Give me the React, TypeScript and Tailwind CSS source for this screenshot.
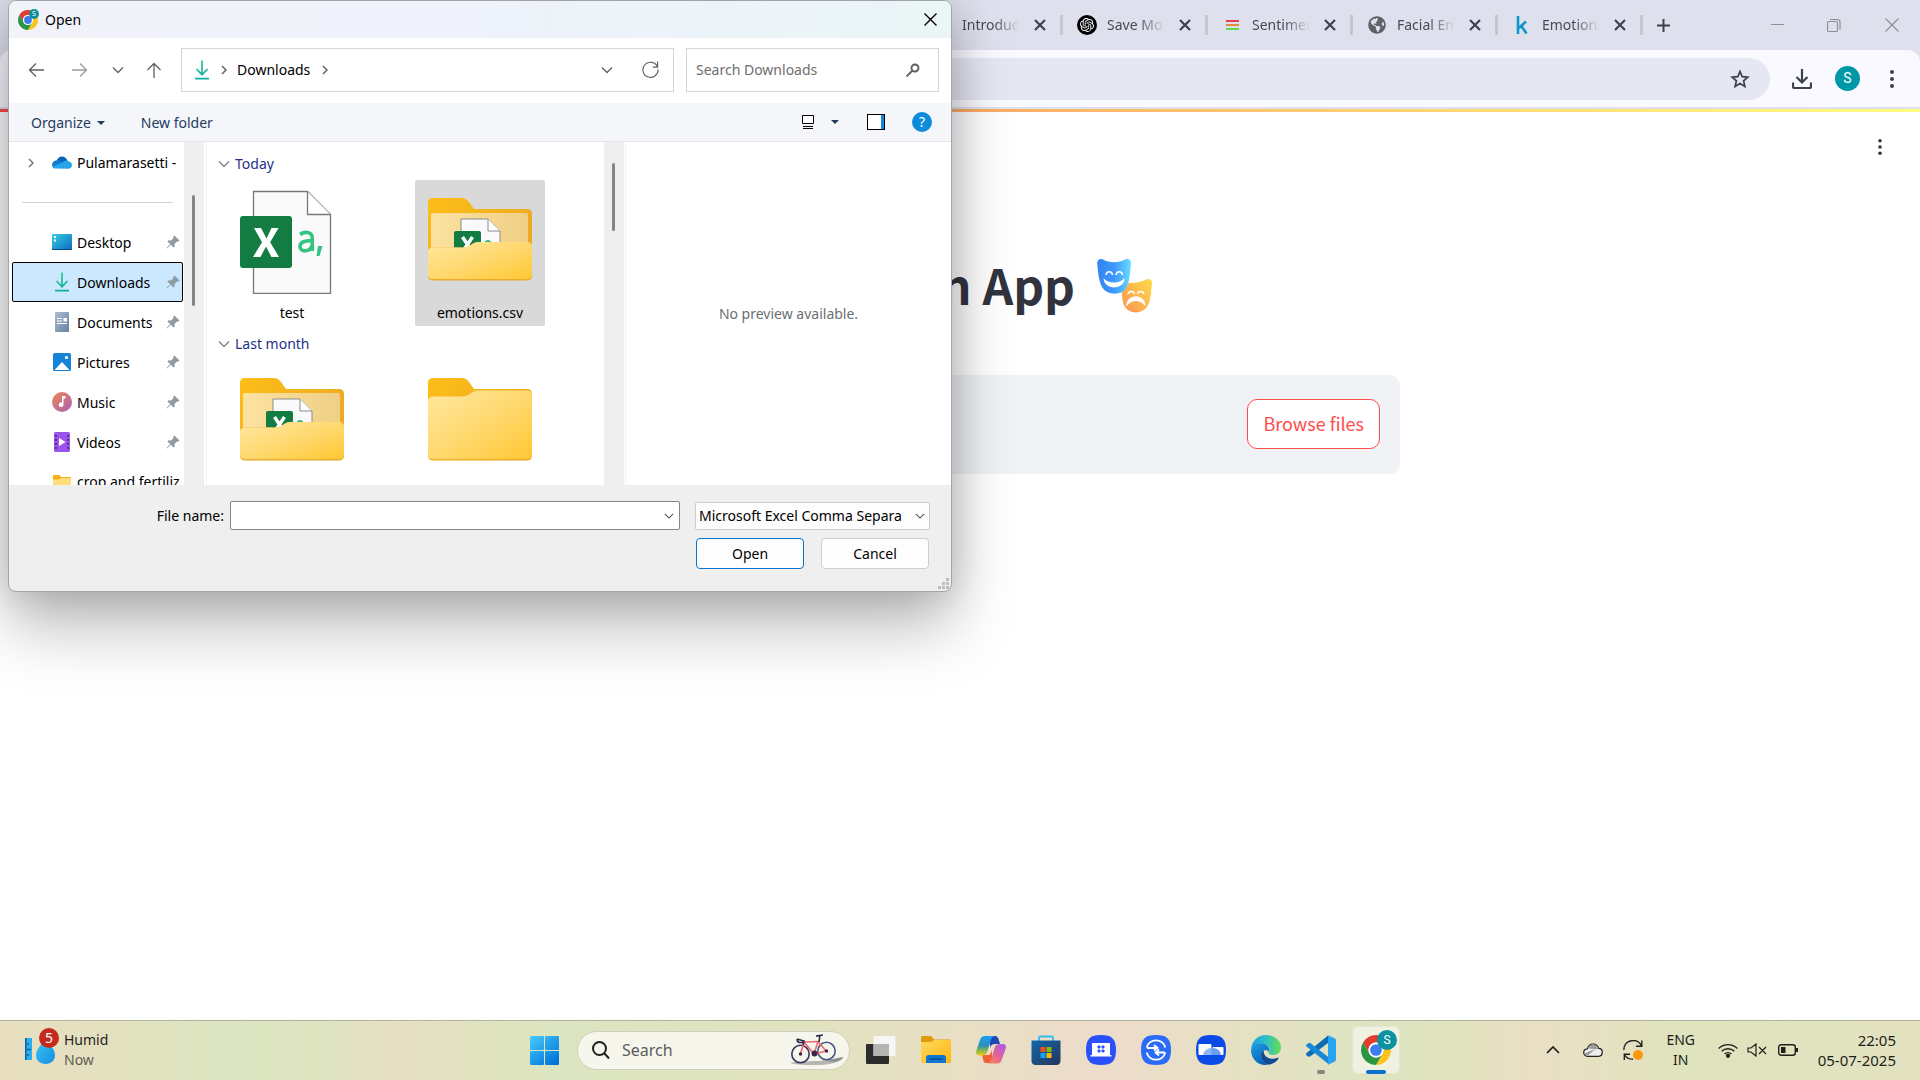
import type { ReactNode } from "react";
import { SiOpenai } from "react-icons/si";
import { FaGlobeAmericas } from "react-icons/fa";

const UI = "font-['Noto_Sans','Open_Sans',sans-serif]";

/* ---------- brand and app icons ---------- */

function ChromeIcon({ className }: { className: string }) {
  return (
    <svg viewBox="2 2 44 44" className={className} aria-hidden="true">
      <path d="M24 13H43.05A22 22 0 0 0 4.95 13L14.47 29.5A11 11 0 0 1 24 13Z" fill="#e33b2e" />
      <path d="M43.05 13A22 22 0 0 1 24 46L33.53 29.5A11 11 0 0 0 24 13Z" fill="#fcc419" />
      <path d="M24 46A22 22 0 0 1 4.95 13L14.47 29.5A11 11 0 0 0 33.53 29.5Z" fill="#2a9644" />
      <circle cx="24" cy="24" r="11" fill="#fff" />
      <circle cx="24" cy="24" r="8.6" fill="#3b7ded" />
    </svg>
  );
}

function MasksIcon() {
  return (
    <svg viewBox="0 0 56 56" className="size-14" aria-hidden="true">
      <defs>
        <linearGradient id="maskBlue" x1="0" y1="0" x2="1" y2="0">
          <stop offset="0" stopColor="#2f86ee" />
          <stop offset="0.5" stopColor="#3f97fd" />
          <stop offset="1" stopColor="#69dcff" />
        </linearGradient>
        <linearGradient id="maskGold" x1="0" y1="1" x2="1" y2="0">
          <stop offset="0" stopColor="#fb9253" />
          <stop offset="1" stopColor="#ffdc4b" />
        </linearGradient>
      </defs>
      <path d="M26 24C33 26 43 25 49 21.500C52 20 55.500 21.500 55 25C54 35 54 42 50.500 48C46 56 32 57 27.500 48C25 43 25 36 24.500 30Z" fill="url(#maskGold)" />
      <path d="M.2 5C0 2 3 0 6 1.500C12 5 22 5 28 1.500C31 0 34.500 2 34 5.500C33 14 33 22 30 28.500C26 38 10 38 5 29C1.500 22 1 13 .2 5Z" fill="url(#maskBlue)" />
      <path d="M6.500 20C11 26 23 26 27.500 20C28 32 7 33 6.500 20Z" fill="#fff" />
      <path d="M9 17C9.500 12.500 15 12.500 15.500 17M19 17C19.500 12.500 25 12.500 25.500 17" stroke="#fff" strokeWidth="1.500" fill="none" />
      <path d="M29 48.500C29.500 34.500 48.500 35 48.500 48C42 41.500 36 41 29 48.500Z" fill="#fff" />
      <path d="M31 36C32 32.500 36.500 32.500 37.500 36M40.500 36C41.500 32.500 46 32.500 47 36" stroke="#fff" strokeWidth="1.500" fill="none" />
    </svg>
  );
}

function BicycleIcon() {
  return (
    <svg viewBox="0 0 56 32" className="h-8 w-14 shrink-0" aria-hidden="true">
      <path d="M1 29C14 26 30 28 36 26L54 23C54 27 42 31 30 31C18 31 8 31 1 29Z" fill="#b5b5b2" />
      <path d="M38 27L54 23C53 27 44 29 38 27Z" fill="#8d8d8b" />
      <g fill="none" strokeWidth="1.600">
        <circle cx="11.500" cy="20" r="8.700" stroke="#3a3560" />
        <circle cx="37.500" cy="17" r="8.700" stroke="#42588a" />
        <path d="M11.500 20L15 8L29 7.500L25 20L15 8M25 20L37 17L29 7.500" stroke="#f0686f" />
        <path d="M14 11L15 7L8 5M8 5C8 9 11 9 14 8M30 8L31 1M27 2L34 1" stroke="#2c2a45" />
      </g>
      <circle cx="25.500" cy="19.500" r="3" fill="#3a2544" />
      <circle cx="11.500" cy="20" r="1.700" fill="#3a2544" />
      <circle cx="37.500" cy="17" r="1.700" fill="#3a2544" />
    </svg>
  );
}

function WindowsIcon() {
  return (
    <svg viewBox="0 0 29 29" className="size-[29px]" aria-hidden="true">
      <defs>
        <linearGradient id="win" gradientUnits="userSpaceOnUse" x1="0" y1="0" x2="24" y2="29">
          <stop offset="0" stopColor="#47cdff" />
          <stop offset="1" stopColor="#0072d6" />
        </linearGradient>
      </defs>
      <g fill="url(#win)">
        <rect width="14" height="14" rx="1" />
        <rect x="15" width="14" height="14" rx="1" />
        <rect y="15" width="14" height="14" rx="1" />
        <rect x="15" y="15" width="14" height="14" rx="1" />
      </g>
    </svg>
  );
}

function TaskViewIcon() {
  return (
    <svg viewBox="0 0 30 30" className="size-[30px]" aria-hidden="true">
      <rect x="0" y="9" width="23" height="20" rx="1" fill="#2c2c2c" />
      <rect x="7.500" y="1" width="22" height="20" rx="1" fill="#f6f6f6" />
      <rect x="7.500" y="9" width="15.500" height="12" fill="#b4b4b2" />
    </svg>
  );
}

function ExplorerIcon() {
  return (
    <svg viewBox="0 0 30 28" className="h-7 w-[30px]" aria-hidden="true">
      <defs>
        <linearGradient id="expl" x1="0" y1="0" x2="1" y2="1">
          <stop offset="0" stopColor="#ffd75e" />
          <stop offset="1" stopColor="#fdb813" />
        </linearGradient>
      </defs>
      <path d="M0 1.500C0 .7.700 0 1.500 0H10L13 3.500H29C29.600 3.500 30 4 30 4.500V12H0Z" fill="#dd9b0b" />
      <path d="M0 6H10L13 4H30V25.500C30 26.400 29.500 27 28.500 27H1.500C.5 27 0 26.400 0 25.500Z" fill="url(#expl)" />
      <path d="M5 27V21.500C5 20 6 19 7.500 19H22.500C24 19 25 20 25 21.500V27Z" fill="#0f76cf" />
      <path d="M8.500 23H21.500" stroke="#0a4f94" strokeWidth="1.500" />
    </svg>
  );
}

function CopilotIcon() {
  return (
    <svg viewBox="0 0 30 28" className="h-7 w-[30px]" aria-hidden="true">
      <defs>
        <linearGradient id="copA" x1="0" y1="0" x2="0" y2="1">
          <stop offset="0" stopColor="#1aa0f0" />
          <stop offset="0.500" stopColor="#2b90b8" />
          <stop offset="0.750" stopColor="#88b84a" />
          <stop offset="1" stopColor="#f2c314" />
        </linearGradient>
        <linearGradient id="copB" x1="1" y1="0" x2="0" y2="1">
          <stop offset="0" stopColor="#a45df0" />
          <stop offset="0.500" stopColor="#e2609c" />
          <stop offset="1" stopColor="#fb8d45" />
        </linearGradient>
      </defs>
      <path d="M14 0H19C21 0 22 1.500 22.500 3L24 8H19C16 8 15 9 14 12Z" fill="#1c47b8" />
      <path d="M16 27H10C8 27 7.500 25 7 23L6 19H12C14 19 15 17 16 14Z" fill="#f2603a" />
      <path d="M9 0H19C16.500 0 15.500 2 14.500 5L11.500 15C10.500 18.500 9 19.500 6 19.500H3C.5 19.500-.5 17.500.3 15L4 4C5 1.500 6 0 9 0Z" fill="url(#copA)" />
      <path d="M21 27.500H11C13.500 27.500 14.500 25.500 15.500 22.500L18.500 12C19.500 9 21 8 24 8H27C29.500 8 30.500 10 29.700 12.500L26 23C25 26 24 27.500 21 27.500Z" fill="url(#copB)" />
    </svg>
  );
}

function StoreIcon() {
  return (
    <svg viewBox="0 0 30 30" className="size-[30px]" aria-hidden="true">
      <defs>
        <linearGradient id="store" x1="0" y1="0" x2="1" y2="1">
          <stop offset="0" stopColor="#1169ae" />
          <stop offset="1" stopColor="#263557" />
        </linearGradient>
      </defs>
      <path d="M8 7V3C8 2 8.500 1.500 9.500 1.500H20.500C21.500 1.500 22 2 22 3V7" fill="none" stroke="#38bdf2" strokeWidth="2" />
      <path d="M.5 5.500H29.500V26C29.500 28 28 30 25.500 30H4.500C2 30 .5 28 .5 26Z" fill="url(#store)" />
      <rect x="9.500" y="12" width="5" height="5" fill="#f4511e" />
      <rect x="15.500" y="12" width="5" height="5" fill="#80bb0a" />
      <rect x="9.500" y="18" width="5" height="5" fill="#12a5ee" />
      <rect x="15.500" y="18" width="5" height="5" fill="#fdb90b" />
    </svg>
  );
}

function Squircle({ color, children }: { color: string; children: ReactNode }) {
  return (
    <svg viewBox="0 0 30 30" className="size-[30px]" aria-hidden="true">
      <path d="M15 0C26 0 30 4 30 15S26 30 15 30 0 26 0 15 4 0 15 0Z" fill={color} />
      {children}
    </svg>
  );
}

function LaptopAppIcon() {
  return (
    <Squircle color="#2a50fb">
      <path d="M6 8H24V20H25.500V21.500H4.500V20H6Z" fill="#fff" />
      <g fill="#2a50fb">
        <rect x="11.500" y="10.500" width="3" height="3" rx="1" />
        <rect x="15.500" y="10.500" width="3" height="3" rx="1" />
        <rect x="11.500" y="14.500" width="3" height="3" rx="1" />
        <rect x="15.500" y="14.500" width="3" height="3" rx="1" />
      </g>
    </Squircle>
  );
}

function SwitchAppIcon() {
  return (
    <Squircle color="#2a6cf8">
      <path d="M5.700 12.500A9.600 9.600 0 0 1 24.300 12.500M24.300 17.500A9.600 9.600 0 0 1 5.700 17.500M6 13H16M13 10L16.500 13L13 15.500M24 17.500H15M18 14.500L14.500 17.500L18 20.500" fill="none" stroke="#fff" strokeWidth="1.800" />
    </Squircle>
  );
}

function ScreensAppIcon() {
  return (
    <Squircle color="#0b4ae6">
      <rect x="2.500" y="9" width="13" height="11" rx="1" fill="#fff" />
      <rect x="16.500" y="12" width="11" height="8" rx="1" fill="#fff" />
      <path d="M7 20C8 15 12 13 15.500 13V20Z" fill="#8db8f8" />
      <path d="M15.500 13H16.500C20.500 13 24.500 15.500 25 20H15.500Z" fill="#6a9ef3" />
    </Squircle>
  );
}

function EdgeIcon() {
  return (
    <svg viewBox="0 0 30 30" className="size-[30px]" aria-hidden="true">
      <defs>
        <linearGradient id="edgeTop" x1="0" y1="0.500" x2="1" y2="0.500">
          <stop offset="0" stopColor="#1b9de2" />
          <stop offset="0.500" stopColor="#2cc1c4" />
          <stop offset="1" stopColor="#69dd50" />
        </linearGradient>
        <linearGradient id="edgeLeft" x1="0" y1="0" x2="0.500" y2="1">
          <stop offset="0" stopColor="#1d9fe8" />
          <stop offset="1" stopColor="#0a63b5" />
        </linearGradient>
      </defs>
      <path d="M0 14.500C.5 6 7 0 15 0C24 0 30 6 30 12.500C30 17.500 26 20 22 20C18.500 20 17 18.700 17.700 17.500C20 14.500 18 9.500 12 8.500C6 8 1.500 10.500 0 14.500Z" fill="url(#edgeTop)" />
      <path d="M0 15C1 10.500 5 7.800 11 8.200C16 8.600 19.500 13 18 17C15 13 10.500 16 10.500 21C10.500 25.500 14 29 18 29.500C8 32 0 24.500 0 15Z" fill="url(#edgeLeft)" />
      <path d="M12.500 15.500C7.500 19 11 29 18 29.500C22 29.300 26 26.500 27.500 23.500C28 22.700 27.500 22.300 26.700 22.700C20 25.500 12.500 22.500 12.500 15.500Z" fill="#104a91" />
    </svg>
  );
}

function VsCodeIcon() {
  return (
    <svg viewBox="0 0 30 30" className="size-[30px]" aria-hidden="true">
      <path d="M0 18.500L22 0.500V8L4 21.500C3 22 1.500 21.500.5 20.500Z" fill="#0e6cb5" />
      <path d="M.5 9.500L3 8C3.500 7.700 4 7.800 4.500 8.200L23 22.500V29.500L.5 11.500C0 11 0 10 .5 9.500Z" fill="#1789d6" />
      <path d="M22 .3L28.500 3.300C29.500 3.800 30 4.500 30 5.500V24.500C30 25.500 29.500 26.200 28.500 26.700L22 29.700Z" fill="#27a5f3" />
    </svg>
  );
}

function HumidityIcon() {
  return (
    <svg viewBox="0 0 30 30" className="size-[30px]" aria-hidden="true">
      <defs>
        <linearGradient id="drop" x1="0" y1="0" x2="1" y2="1">
          <stop offset="0" stopColor="#38cbf5" />
          <stop offset="1" stopColor="#178ce0" />
        </linearGradient>
      </defs>
      <rect x="0" y="3" width="7" height="22" fill="#2bafef" />
      <path d="M.8 3V25M2 9H4M2 14.500H6M2 20H4" stroke="#0c5fa8" strokeWidth="1.500" />
      <path d="M20.500 3C23 9 30 13 30 20C30 25.500 26 29 20.500 29S11 25.500 11 20C11 13 18 9 20.500 3Z" fill="url(#drop)" />
    </svg>
  );
}

/* ---------- small line icons ---------- */

function Line({ d, box, className, width = 1.5 }: { d: string; box: string; className: string; width?: number }) {
  return (
    <svg viewBox={box} className={className} fill="none" stroke="currentColor" strokeWidth={width} aria-hidden="true">
      <path d={d} />
    </svg>
  );
}

const ChevronDown = ({ className }: { className: string }) => <Line box="0 0 12 8" d="M1 1.500L6 6.500L11 1.500" className={className} width={1.3} />;

function DownloadsIcon() {
  return (
    <svg viewBox="0 0 14 20" className="h-5 w-3.5" fill="none" stroke="url(#dlg)" strokeWidth="1.700" aria-hidden="true">
      <defs>
        <linearGradient id="dlg" gradientUnits="userSpaceOnUse" x1="0" y1="0" x2="14" y2="20">
          <stop offset="0" stopColor="#2fd089" />
          <stop offset="1" stopColor="#0aa3a6" />
        </linearGradient>
      </defs>
      <path d="M7 0.500V14.500M1.500 9L7 14.700L12.500 9M0 18.600H14" />
    </svg>
  );
}

function PinIcon() {
  return (
    <svg viewBox="0 0 14 14" className="size-3.5" fill="#8f9ba3" aria-hidden="true">
      <path d="M8.500.5L13.500 5.500L12 6.800L11 6.500L8.500 9L8.700 11.500L7.500 12.500L4.700 9.800L1 13.500L.4 13L4.200 9.200L1.500 6.500L2.500 5.300L5 5.500L7.500 3L7.200 1.800Z" />
    </svg>
  );
}

function OneDriveIcon() {
  return (
    <svg viewBox="0 0 20 13" className="h-[13px] w-5" aria-hidden="true">
      <path d="M4.500 5C6-.5 13-1.500 15.500 4.500L10 9L2 8Z" fill="#0a62b8" />
      <path d="M4.500 4.500C1 4.500-.5 8 .3 10.500L3 12L12 7.500L8 4.800C7 4.400 5.500 4.200 4.500 4.500Z" fill="#1279cf" />
      <path d="M2.500 12.500C1.500 12.500.8 11.800.4 10.800L11 6C12 5 15 3.500 17 5.500C19.500 6 20.500 8.500 19.700 10.500C19 12 18 12.700 16.500 12.700Z" fill="#28a5ea" />
    </svg>
  );
}

function DesktopIcon() {
  return (
    <svg viewBox="0 0 20 16" className="h-4 w-5" aria-hidden="true">
      <defs>
        <linearGradient id="desk" x1="0" y1="0" x2="1" y2="1">
          <stop offset="0" stopColor="#33cfe4" />
          <stop offset="1" stopColor="#0e68bd" />
        </linearGradient>
      </defs>
      <rect width="20" height="16" rx="1" fill="url(#desk)" />
      <path d="M2 2H4V4H2ZM2 5.500H4V7.500H2Z" fill="#fff" />
      <path d="M0 15H20V15.500Q20 16 19 16H1Q0 16 0 15.500Z" fill="#0c4a80" />
    </svg>
  );
}

function DocumentIcon() {
  return (
    <svg viewBox="0 0 14 20" className="h-5 w-3.5" aria-hidden="true">
      <defs>
        <linearGradient id="doc" x1="0" y1="0" x2="1" y2="1">
          <stop offset="0" stopColor="#adbfd2" />
          <stop offset="1" stopColor="#64809f" />
        </linearGradient>
      </defs>
      <rect width="14" height="20" rx="1" fill="url(#doc)" />
      <path d="M2 6.500H7M2 9H7M2 11.500H12M8.500 7.700H12" stroke="#fff" strokeWidth="1.100" />
      <rect x="8.500" y="6" width="3.500" height="3.500" fill="#fff" />
    </svg>
  );
}

function PictureIcon() {
  return (
    <svg viewBox="0 0 18 18" className="size-[18px]" aria-hidden="true">
      <rect width="18" height="18" rx="1.500" fill="#1583d8" />
      <path d="M1.500 17L9 9L16.500 17Z" fill="#fff" />
      <circle cx="13.500" cy="4.500" r="1.600" fill="#fff" />
    </svg>
  );
}

function MusicIcon() {
  return (
    <svg viewBox="0 0 20 20" className="size-5" aria-hidden="true">
      <defs>
        <linearGradient id="music" x1="0" y1="0" x2="1" y2="1">
          <stop offset="0" stopColor="#f08650" />
          <stop offset="1" stopColor="#a761b8" />
        </linearGradient>
      </defs>
      <circle cx="10" cy="10" r="10" fill="url(#music)" />
      <path d="M10 4H13.500V6.500H11.500V12.500A2.300 2.300 0 1 1 10 10.500Z" fill="#fff" />
    </svg>
  );
}

function VideoIcon() {
  return (
    <svg viewBox="0 0 16 20" className="h-5 w-4" aria-hidden="true">
      <rect width="16" height="20" rx="1.500" fill="#9b54ea" />
      <path d="M2 3V18M14 3V18" stroke="#47257d" strokeWidth="1.800" strokeDasharray="1.800 2.200" />
      <path d="M5 6L11.500 10L5 14Z" fill="#fff" />
    </svg>
  );
}

function SmallFolderIcon() {
  return (
    <svg viewBox="0 0 18 14" className="h-3.5 w-[18px]" aria-hidden="true">
      <path d="M0 0H6.500L8 2H18V6H0Z" fill="#f5b01b" />
      <path d="M0 4.500H6L8 3H18V14H0Z" fill="#ffdc7c" />
    </svg>
  );
}

function FolderGradients() {
  return (
    <defs>
      <linearGradient id="fback" x1="0" y1="0" x2="1" y2="0.600">
        <stop offset="0" stopColor="#fdbe19" />
        <stop offset="1" stopColor="#eaa922" />
      </linearGradient>
      <linearGradient id="ffront" x1="0" y1="0" x2="1" y2="1">
        <stop offset="0" stopColor="#ffe7a0" />
        <stop offset="0.500" stopColor="#ffd970" />
        <stop offset="1" stopColor="#ffc733" />
      </linearGradient>
      <linearGradient id="fpaper" x1="0" y1="0" x2="1" y2="0">
        <stop offset="0" stopColor="#fce2a0" />
        <stop offset="1" stopColor="#efcf86" />
      </linearGradient>
    </defs>
  );
}

function FullFolderIcon() {
  return (
    <svg viewBox="0 0 104 83" className="h-[83px] w-[104px]" aria-hidden="true">
      <FolderGradients />
      <path d="M0 5Q0 0 5 0H34Q38 0 41 4L46 11H99Q104 11 104 16V77Q104 82 99 82H5Q0 82 0 77Z" fill="url(#fback)" />
      <rect x="3" y="15" width="97" height="50" rx="2" fill="url(#fpaper)" />
      <path d="M33 21H60L72 33V60H33Z" fill="#fafafa" stroke="#8b8b8b" />
      <path d="M60 21V33H72" fill="#fff" stroke="#8b8b8b" />
      <path d="M57 46C58 42 62 42 63 46V52" fill="none" stroke="#33b97a" strokeWidth="2" />
      <rect x="26" y="33" width="27" height="27" rx="2" fill="#127c43" />
      <path d="M34.500 39L44.500 54M44.500 39L34.500 54" stroke="#fff" strokeWidth="3.500" />
      <path d="M0 54Q0 49.500 5 49.500H35Q39 49.500 42 47.500L45 45.500Q47 44 50 44H99Q104 44 104 49V77Q104 82.500 99 82.500H5Q0 82.500 0 77Z" fill="#e9ad2e" />
      <path d="M0 54Q0 49.500 5 49.500H35Q39 49.500 42 47.500L45 45.500Q47 44 50 44H99Q104 44 104 49V76Q104 81 99 81H5Q0 81 0 76Z" fill="url(#ffront)" />
    </svg>
  );
}

function EmptyFolderIcon() {
  return (
    <svg viewBox="0 0 104 83" className="h-[83px] w-[104px]" aria-hidden="true">
      <FolderGradients />
      <path d="M0 5Q0 0 5 0H34Q38 0 41 4L46 11H99Q104 11 104 16V77Q104 82.500 99 82.500H5Q0 82.500 0 77Z" fill="url(#fback)" />
      <path d="M0 24Q0 18.500 5 18.500H34Q38 18.500 41 16.500L45 14Q47 12.500 50 12.500H99Q104 12.500 104 17V76Q104 81 99 81H5Q0 81 0 76Z" fill="url(#ffront)" />
    </svg>
  );
}

function CsvFileIcon() {
  return (
    <svg viewBox="0 -5 104 108" className="h-[108px] w-[104px]" aria-hidden="true">
      <path d="M13.500 .5H67.500L90.500 23.500V102.300H13.500Z" fill="#fafafa" stroke="#777" strokeWidth="1.300" />
      <path d="M67.500 .5V23.500H90.500" fill="#fff" stroke="#777" strokeWidth="1.300" />
      <rect x="0" y="25" width="52" height="52" rx="3" fill="#127c43" />
      <path d="M14 37H21L26.500 47.500L31.500 37H38.500L30.200 51.200L39 66H31.500L26 55.500L20.500 66H13L22 51.200Z" fill="#fff" />
      <path d="M60 43.500C64 40.500 72 40 72.300 47V60M72.300 49.500C64 50 60 51 60 55.500C60 61.500 70 61.500 72.300 54" fill="none" stroke="#33c481" strokeWidth="3.600" />
      <path d="M78 55H82.500L79.500 65H76.500Z" fill="#33c481" />
    </svg>
  );
}

/* ---------- browser ---------- */

const tabs: { title: string; icon: ReactNode }[] = [
  { title: "Introduc", icon: null },
  {
    title: "Save Mo",
    icon: (
      <span className="flex size-5 items-center justify-center rounded-full bg-black">
        <SiOpenai className="size-3.5 text-white" />
      </span>
    ),
  },
  {
    title: "Sentimer",
    icon: (
      <svg viewBox="0 0 13 10" className="h-2.5 w-[13px]" aria-hidden="true">
        <path d="M0 1H13" stroke="#e63f4b" strokeWidth="2" />
        <path d="M0 5H13" stroke="#e08e39" strokeWidth="2" />
        <path d="M0 9H13" stroke="#66d855" strokeWidth="2" />
      </svg>
    ),
  },
  { title: "Facial Em", icon: <FaGlobeAmericas className="size-[18px] text-[#5f6368]" /> },
  {
    title: "Emotions",
    icon: (
      <svg viewBox="0 0 12 18" className="h-[18px] w-3" fill="none" stroke="#0f95c9" strokeWidth="2.600" aria-hidden="true">
        <path d="M2 0V18M10 5.500L3 12M5 9.500L10.500 17.500" />
      </svg>
    ),
  },
];

function TabStrip() {
  return (
    <header className="flex h-[50px] shrink-0 items-center justify-end bg-[#dee1ed]">
      <ul className="flex" aria-label="Tabs">
        {tabs.map((t) => (
          <li key={t.title} className="flex h-5 w-[145px] items-center border-r-[3px] border-[#c4c7d0] pl-3">
            <span className="flex w-6 items-center justify-center">{t.icon}</span>
            <span className="ml-2 w-[58px] overflow-hidden text-sm/5 whitespace-nowrap text-[#474b57] [mask-image:linear-gradient(to_right,black_55%,transparent)]">
              {t.title}
            </span>
            <button aria-label={`Close ${t.title}`} className="ml-3.5 text-[#3b4252]">
              <Line box="0 0 12 12" d="M1 1L11 11M11 1L1 11" className="size-3" width={2.2} />
            </button>
          </li>
        ))}
      </ul>
      <div className="flex w-[277px] items-center text-[#8d909b]">
        <button aria-label="New tab" className="ml-3.5 text-[#3c404b]">
          <Line box="0 0 13 13" d="M6.500 0V13M0 6.500H13" className="size-[13px]" width={2} />
        </button>
        <button aria-label="Minimize" className="ml-[101px]">
          <Line box="0 0 14 14" d="M0 6.500H13" className="size-3.5" width={1} />
        </button>
        <button aria-label="Restore" className="ml-[42px]">
          <Line box="0 0 14 14" d="M.5 5Q.5 3.500 2 3.500H9Q10.500 3.500 10.500 5V12Q10.500 13.500 9 13.500H2Q.5 13.500.5 12ZM3 1.500H10.500Q13 1.500 13 4V11.500" className="size-3.5" width={1.2} />
        </button>
        <button aria-label="Close window" className="ml-[44px]">
          <Line box="0 0 14 14" d="M.5.5L13.500 13.500M13.500.5L.5 13.500" className="size-3.5" width={1.2} />
        </button>
      </div>
    </header>
  );
}

function Dots({ className }: { className: string }) {
  return (
    <svg viewBox="0 0 4 18" className={className} fill="currentColor" aria-hidden="true">
      <circle cx="2" cy="2" r="2" />
      <circle cx="2" cy="9" r="2" />
      <circle cx="2" cy="16" r="2" />
    </svg>
  );
}

function Toolbar() {
  return (
    <div className="shrink-0 bg-[#dee1ed]">
      <div className="flex h-[57px] items-center rounded-t-xl bg-[#faf9ff] pr-[26px] pl-40 text-[#3b4252]">
        <div className="flex h-[42px] grow items-center rounded-full bg-[#e5e7f3] pr-5">
          <input aria-label="Address" className="h-full min-w-0 grow bg-transparent outline-none" />
          <button aria-label="Bookmark this page">
            <Line
              box="0 0 20 20"
              d="M10 2.500L12.200 7.700L17.800 8.200L13.600 11.900L14.900 17.400L10 14.500L5.100 17.400L6.400 11.900L2.200 8.200L7.800 7.700Z"
              className="size-5 text-[#3c404b]"
              width={1.7}
            />
          </button>
        </div>
        <button aria-label="Downloads" className="ml-[22px]">
          <Line box="0 0 20 20" d="M10 0V13M4.500 8L10 13.500L15.500 8M1 13.500V17.500Q1 19 2.500 19H17.500Q19 19 19 17.500V13.500" className="size-5" width={2.2} />
        </button>
        <button aria-label="Profile" className="ml-[23px] size-[25px] rounded-full bg-[#0098a6] font-['Roboto',sans-serif] text-sm/[25px] text-white">
          S
        </button>
        <button aria-label="Chrome menu" className="ml-[30px]">
          <Dots className="h-[18px] w-1" />
        </button>
      </div>
      <div className="h-0.5 bg-[#dee1ea]" />
    </div>
  );
}

function AppPage() {
  return (
    <main className="min-h-0 grow bg-white font-['Noto_Sans_CJK_SC',sans-serif] text-[#31333f]">
      <div className="h-[3px] bg-linear-to-r from-[#ff4b4b] to-[#fffd80]" />
      <div className="flex h-[69px] items-center justify-end pr-[38px]">
        <button aria-label="Main menu">
          <Dots className="h-4 w-1" />
        </button>
      </div>
      <div className="mx-auto w-[880px]">
        <h1 className="mt-[66px] flex h-[78px] items-center justify-end pr-[247px] text-5xl/[66px] font-bold">
          <span className="pb-1">n App</span>
          <span className="ml-[22px]">
            <MasksIcon />
          </span>
        </h1>
        <section aria-label="File uploader" className="mt-[50px] flex h-[99px] items-center justify-end rounded-[10px] bg-[#f0f2f6] pr-5 pb-0.5">
          <button className="h-[50px] rounded-[10px] border border-[#ff4b4b] bg-white px-[15px] pb-0.5 text-lg text-[#ff4b4b]">Browse files</button>
        </section>
      </div>
    </main>
  );
}

/* ---------- file dialog ---------- */

const places: { name: string; icon: ReactNode; selected?: boolean }[] = [
  { name: "Desktop", icon: <DesktopIcon /> },
  { name: "Downloads", icon: <DownloadsIcon />, selected: true },
  { name: "Documents", icon: <DocumentIcon /> },
  { name: "Pictures", icon: <PictureIcon /> },
  { name: "Music", icon: <MusicIcon /> },
  { name: "Videos", icon: <VideoIcon /> },
];

function GroupHeading({ children }: { children: ReactNode }) {
  return (
    <h2 className="flex h-[34px] items-center pt-px pl-[11px] text-[#1e3287]">
      <ChevronDown className="mr-[5px] h-2 w-3 text-[#808080]" />
      {children}
    </h2>
  );
}

function Item({ icon, name, selected }: { icon: ReactNode; name: string; selected?: boolean }) {
  return (
    <li className={`flex h-[146px] w-[130px] flex-col items-center rounded-xs ${selected ? "bg-[#d9d9d9]" : ""}`}>
      <div className="flex h-[119px] items-center">{icon}</div>
      <span className="mt-1 leading-5">{name}</span>
    </li>
  );
}

function OpenDialog() {
  return (
    <div
      role="dialog"
      aria-label="Open"
      className="absolute top-0 left-2 w-[944px] overflow-hidden rounded-lg border border-[#a3a5ab] bg-[#efefef] text-sm text-black shadow-[0_36px_64px_rgba(0,0,0,0.26),0_0_40px_rgba(0,0,0,0.18)]"
    >
      <div className="flex h-[37px] items-center bg-linear-to-r from-[#f2f2f9] via-[#eef2fb] to-[#eaf5f6] pr-3.5 pl-[9px]">
        <span className="relative">
          <ChromeIcon className="size-5" />
          <span className="absolute -top-px -right-px size-2.5 rounded-full bg-[#0e8f9c] text-center text-[7px]/[10px] text-white">S</span>
        </span>
        <span className="ml-[7px] grow">Open</span>
        <button aria-label="Close">
          <Line box="0 0 13 13" d="M.5.5L12.500 12.500M12.500.5L.5 12.500" className="size-[13px]" width={1.4} />
        </button>
      </div>

      <div className="flex h-[65px] items-center bg-white pr-3 pb-0.5 pl-[19px] text-[#606060]">
        <button aria-label="Back"><Line box="0 0 16 16" d="M16 8H1.500M8 1.500L1.500 8L8 14.500" className="size-4" width={1.3} /></button>
        <button aria-label="Forward" className="ml-7 text-[#9a9a9a]"><Line box="0 0 16 16" d="M0 8H14.500M8 1.500L14.500 8L8 14.500" className="size-4" width={1.3} /></button>
        <button aria-label="Recent locations" className="ml-6"><ChevronDown className="h-2 w-3" /></button>
        <button aria-label="Up" className="ml-[22px]"><Line box="0 0 16 16" d="M8 16V1.500M1.500 8L8 1.500L14.500 8" className="size-4" width={1.3} /></button>
        <div className="ml-[19px] flex h-11 w-[493px] items-center border border-[#d5d5d5] pl-[13px]">
          <DownloadsIcon />
          <Line box="0 0 6 10" d="M1 1L5 5L1 9" className="ml-3 h-2.5 w-1.5" />
          <span className="ml-2.5 text-black">Downloads</span>
          <Line box="0 0 6 10" d="M1 1L5 5L1 9" className="ml-3 h-2.5 w-1.5" />
          <button aria-label="Previous locations" className="ml-auto"><ChevronDown className="h-2 w-3.5" /></button>
          <button aria-label="Refresh" className="mr-3.5 ml-7">
            <Line box="0 0 18 18" d="M16.500 6.500A8 8 0 1 0 17 9M16.500 .5V6.500H11.500" className="size-[17px]" width={1.2} />
          </button>
        </div>
        <div className="ml-3 flex h-11 grow items-center border border-[#d5d5d5] pr-[18px] pl-[9px]">
          <input aria-label="Search Downloads" placeholder="Search Downloads" className="min-w-0 grow outline-none placeholder:text-[#6d6d6d]" />
          <Line box="0 0 14 14" d="M0.500 13.500L6 8M5.500 5A3.500 3.500 0 1 0 12.500 5A3.500 3.500 0 1 0 5.500 5" className="size-3.5" width={1.9} />
        </div>
      </div>

      <div className="flex h-[39px] items-center border-b border-[#e2e5e9] bg-[#f4f6f9] pr-[19px] pl-[22px] text-[#1f3a63]">
        <button className="flex items-center pt-px">
          Organize
          <svg viewBox="0 0 8 4" className="ml-1.5 h-1 w-2" fill="currentColor" aria-hidden="true"><path d="M0 0H8L4 4Z" /></svg>
        </button>
        <button className="ml-9 pt-px">New folder</button>
        <button aria-label="Change your view" className="ml-auto">
          <svg viewBox="0 0 12 14" className="h-3.5 w-3" fill="#fff" stroke="#000" aria-hidden="true">
            <path d="M.5.5H11.500V8.500H.5ZM1 11.500H11M1 13.500H11" />
          </svg>
        </button>
        <button aria-label="More options" className="ml-[17px]">
          <svg viewBox="0 0 8 4" className="h-1 w-2" fill="currentColor" aria-hidden="true"><path d="M0 0H8L4 4Z" /></svg>
        </button>
        <button aria-label="Preview pane" className="ml-7">
          <svg viewBox="0 0 18 16" className="h-4 w-[18px]" aria-hidden="true">
            <rect x=".5" y=".5" width="17" height="15" fill="#fff" stroke="#000" />
            <rect x="14" y="1" width="3" height="14" fill="#1287dc" />
          </svg>
        </button>
        <button aria-label="Help" className="ml-[27px] size-5 rounded-full bg-[#0f8bdb] text-center text-sm/5 text-white">?</button>
      </div>

      <div className="flex h-[343px] bg-white">
        <nav aria-label="Places" className="w-[175px] overflow-hidden whitespace-nowrap">
          <a href="#onedrive" className="flex h-[41px] items-center pl-[19px]">
            <Line box="0 0 6 10" d="M1 1L5 5L1 9" className="h-2.5 w-1.5 text-[#777]" />
            <span className="ml-[18px]"><OneDriveIcon /></span>
            <span className="ml-[5px] w-[103px] shrink-0 overflow-hidden">Pulamarasetti - P</span>
          </a>
          <hr className="mt-[19px] mr-[11px] mb-5 ml-[13px] h-0 border-[#cfd3d6]" />
          <ul className="-mt-px">
            {places.map((p) => (
              <li key={p.name} className="pr-px pl-[3px]">
                <a
                  href={`#${p.name}`}
                  className={`flex h-10 items-center border pr-0.5 pl-9 ${p.selected ? "rounded-xs border-black bg-[#cce8ff]" : "border-transparent"}`}
                >
                  <span className="flex w-[26px] shrink-0 justify-center">{p.icon}</span>
                  <span className="ml-0.5 grow pt-px">{p.name}</span>
                  <PinIcon />
                </a>
              </li>
            ))}
            <li className="pl-[3px]">
              <a href="#crop" className="flex h-10 items-center pl-[37px]">
                <span className="flex w-[26px] shrink-0 justify-center"><SmallFolderIcon /></span>
                <span className="ml-0.5 w-[103px] shrink-0 overflow-hidden">crop and fertilize</span>
              </a>
            </li>
          </ul>
        </nav>
        <div className="w-5 shrink-0 bg-[#efefef] pt-[53px]">
          <div className="ml-2 h-[111px] w-[3px] rounded-full bg-[#858585]" />
        </div>
        <div className="ml-0.5 min-w-0 grow overflow-hidden border-l border-[#f2f2f2] pt-1">
          <GroupHeading>Today</GroupHeading>
          <ul className="flex gap-[58px] pl-5">
            <Item icon={<CsvFileIcon />} name="test" />
            <Item icon={<FullFolderIcon />} name="emotions.csv" selected />
          </ul>
          <GroupHeading>Last month</GroupHeading>
          <ul className="flex gap-[58px] pl-5">
            <Item icon={<FullFolderIcon />} name="" />
            <Item icon={<EmptyFolderIcon />} name="" />
          </ul>
        </div>
        <div className="w-5 shrink-0 bg-[#efefef] pt-[21px]">
          <div className="ml-2 h-[68px] w-[3px] rounded-full bg-[#858585]" />
        </div>
        <div className="ml-px flex w-[326px] items-center justify-center border-l border-[#f2f2f2] text-[#6d6f72]">No preview available.</div>
      </div>

      <form className="relative h-[106px] pt-4 pr-[21px]" onSubmit={(e) => e.preventDefault()}>
        <div className="flex items-center justify-end">
          <label htmlFor="fname">File name:</label>
          <div className="ml-1.5 flex h-[29px] w-[450px] items-center rounded-xs border border-[#868686] bg-white pr-[5px]">
            <input id="fname" className="h-full min-w-0 grow px-1 outline-none" />
            <ChevronDown className="h-2 w-2.5 text-[#555]" />
          </div>
          <div className="relative ml-[15px] flex items-center">
            <select aria-label="File type" className="h-7 w-[235px] appearance-none rounded-xs border border-[#cdcdcd] bg-[#fdfdfd] pl-[3px] text-sm">
              <option>Microsoft Excel Comma Separa</option>
            </select>
            <ChevronDown className="pointer-events-none absolute right-[5px] h-2 w-2.5 text-[#555]" />
          </div>
        </div>
        <div className="mt-2 flex justify-end gap-[17px] pr-px">
          <button type="submit" className="h-[31px] w-[108px] rounded-sm border border-[#0a74cc] bg-[#fdfdfd]">Open</button>
          <button type="button" className="h-[31px] w-[108px] rounded-sm border border-[#cfcfcf] bg-[#fdfdfd]">Cancel</button>
        </div>
        <svg viewBox="0 0 11 11" className="absolute right-0.5 bottom-0.5 size-[11px]" fill="#bdbdbd" aria-hidden="true">
          <path d="M8 0H11V3H8ZM4 4H7V7H4ZM8 4H11V7H8ZM0 8H3V11H0ZM4 8H7V11H4ZM8 8H11V11H8Z" />
        </svg>
      </form>
    </div>
  );
}

/* ---------- taskbar ---------- */

const apps: { name: string; icon: ReactNode }[] = [
  { name: "Task view", icon: <TaskViewIcon /> },
  { name: "File Explorer", icon: <ExplorerIcon /> },
  { name: "Copilot", icon: <CopilotIcon /> },
  { name: "Microsoft Store", icon: <StoreIcon /> },
  { name: "Laptop app", icon: <LaptopAppIcon /> },
  { name: "Switch app", icon: <SwitchAppIcon /> },
  { name: "Screens app", icon: <ScreensAppIcon /> },
  { name: "Edge", icon: <EdgeIcon /> },
];

function Taskbar() {
  return (
    <footer className="grid h-[60px] shrink-0 grid-cols-[1fr_auto_1fr] items-center border-t border-[#b2b4a2] bg-[linear-gradient(90deg,#e8dfc0_0%,#e4e0bf_5%,#dbe5c0_12%,#dfe3c0_17%,#e6dfc2_21%,#dfe3bf_26%,#dbe5c0_29%,#e1e2bf_42%,#e8dfc4_50%,#eddccb_58%,#e8e0c4_63%,#dce4c0_72%,#e1e2bf_76%,#eadfc3_80%,#dfe3be_88%,#e3e2c0_100%)] pb-px text-[#1f1f1c]">
      <button className="relative ml-[25px] flex items-center gap-[9px] justify-self-start text-left text-sm/5">
        <HumidityIcon />
        <span className="absolute -top-0.5 left-3.5 size-5 rounded-full bg-[#c42b1c] text-center text-sm/5 text-white">5</span>
        <span>
          <span className="block">Humid</span>
          <span className="block text-[#5e5e56]">Now</span>
        </span>
      </button>

      <div className="flex items-center gap-[7px]">
        <button aria-label="Start" className="flex size-12 items-center justify-center"><WindowsIcon /></button>
        <label className="ml-0.5 flex h-[39px] w-[273px] items-center rounded-full border border-[#cfd0bb] bg-[#f6f6ed] pr-1 pl-3.5">
          <Line box="0 0 18 18" d="M12.500 12.500L17 17.500M1 7.500A6.500 6.500 0 1 0 14 7.500A6.500 6.500 0 1 0 1 7.500" className="size-[18px] shrink-0" width={2} />
          <input placeholder="Search" aria-label="Search" className="ml-3 min-w-0 grow bg-transparent text-base outline-none placeholder:text-[#5c5c58]" />
          <BicycleIcon />
        </label>
        {apps.map((a) => (
          <button key={a.name} aria-label={a.name} className="flex size-12 items-center justify-center">{a.icon}</button>
        ))}
        <button aria-label="Visual Studio Code" className="relative flex size-12 items-center justify-center">
          <VsCodeIcon />
          <span className="absolute bottom-0 h-1 w-2 rounded-full bg-[#85867a]" />
        </button>
        <button aria-label="Chrome" className="relative flex size-12 items-center justify-center rounded-md border border-[#e6e6d4] bg-[#f0f1e1]">
          <ChromeIcon className="size-[30px]" />
          <span className="absolute top-[3px] right-0.5 size-5 rounded-full bg-[#0b91a0] text-center font-['Roboto',sans-serif] text-xs/5 text-white">S</span>
          <span className="absolute -bottom-px h-1 w-5 rounded-full bg-[#0a6fcb]" />
        </button>
      </div>

      <div className="flex items-center justify-self-end pr-6 text-sm/5">
        <button aria-label="Hidden icons"><Line box="0 0 14 8" d="M1 7L7 1L13 7" className="h-2 w-3.5" width={1.7} /></button>
        <svg viewBox="0 0 20 14" className="ml-[23px] h-3.5 w-5" aria-hidden="true">
          <path d="M4.500 13.300C2 13.300.7 11.500.7 9.600C.7 7.500 2.200 6 4.300 5.800C5.200 2.800 7.200 1 10 1S14.800 2.600 15.700 5.300C17.800 5.400 19.300 7.200 19.300 9.300C19.300 11.600 17.700 13.300 15.500 13.300Z" fill="#eee" stroke="#222" strokeWidth="1.200" />
          <path d="M1.500 10.500L12 6L5 5.500C6 2.500 8 1.600 10 1.600S14 3 15 6L12 6.300L5 12.500C3 12.800 1.700 12 1.500 10.500Z" fill="#9b9b9b" />
        </svg>
        <svg viewBox="0 0 20 20" className="ml-5 size-5" aria-hidden="true">
          <path d="M.8 10C.8 -1 15 -2.500 18.500 6M18.800 .5V6.200H13M10 19.300C6 19.300 3 17.500 1.500 14.500M1.300 20V14.200H7" fill="none" stroke="#222" strokeWidth="1.400" />
          <circle cx="15" cy="15" r="5" fill="#fb990a" />
        </svg>
        <button className="ml-6 w-7 text-center">
          <span className="-mx-2 block">ENG</span>
          <span className="block">IN</span>
        </button>
        <svg viewBox="0 0 20 15" className="ml-[23px] h-[15px] w-5" fill="none" stroke="currentColor" strokeWidth="1.400" aria-hidden="true">
          <path d="M.7 5.500A13 13 0 0 1 19.300 5.500M3.700 8.300A9 9 0 0 1 16.300 8.300M6.600 11A4.800 4.800 0 0 1 13.400 11" />
          <circle cx="10" cy="12.800" r="1.400" fill="currentColor" />
        </svg>
        <svg viewBox="0 0 20 14" className="ml-[9px] h-3.5 w-5" fill="none" stroke="currentColor" strokeWidth="1.200" aria-hidden="true">
          <path d="M1 5V9H4L9 13V1L4 5ZM12 4L19 11M19 4L12 11" />
        </svg>
        <svg viewBox="0 0 20 12" className="ml-[11px] h-3 w-5" fill="none" stroke="currentColor" strokeWidth="1.400" aria-hidden="true">
          <rect x=".7" y=".7" width="16.600" height="10.600" rx="2.500" />
          <path d="M3 3H7.500V9H3Z" fill="currentColor" stroke="none" />
          <path d="M19 4V8" strokeWidth="2" />
        </svg>
        <button className="ml-5 text-right text-[15px]/5">
          <span className="block">22:05</span>
          <span className="block">05-07-2025</span>
        </button>
      </div>
    </footer>
  );
}

export default function App() {
  return (
    <div className={`relative flex h-screen flex-col overflow-hidden ${UI}`}>
      <div className="relative flex min-h-0 grow flex-col overflow-hidden">
        <TabStrip />
        <Toolbar />
        <AppPage />
        <OpenDialog />
      </div>
      <Taskbar />
    </div>
  );
}
